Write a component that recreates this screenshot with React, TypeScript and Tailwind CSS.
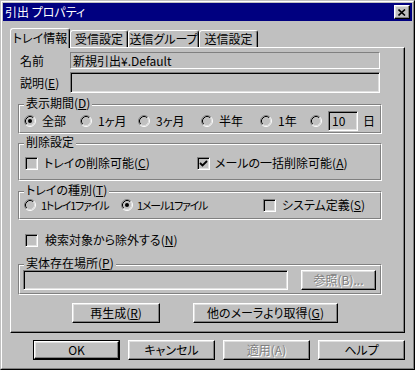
import React from "react";

const face = "bg-[#c0c0c0]";
const raised =
	"border border-t-white border-l-white border-r-black border-b-black shadow-[inset_-1px_-1px_0_#808080,inset_1px_1px_0_#dfdfdf]";
const sunken =
	"border border-t-[#808080] border-l-[#808080] border-r-white border-b-white shadow-[inset_1px_1px_0_#000,inset_-1px_-1px_0_#dfdfdf]";
const disabledText = "text-[#808080] [text-shadow:1px_1px_0_#fff]";

function Radio({ checked }: { checked?: boolean }) {
	return (
		<svg width="12" height="12" viewBox="0 0 12 12" className="shrink-0">
			<circle cx="6" cy="6" r="5" fill="#c0c0c0" />
			<path d="M2.11 9.89 A5.5 5.5 0 0 1 9.89 2.11" stroke="#808080" fill="none" />
			<path d="M9.89 2.11 A5.5 5.5 0 0 1 2.11 9.89" stroke="#fff" fill="none" />
			<path d="M2.82 9.18 A4.5 4.5 0 0 1 9.18 2.82" stroke="#000" fill="none" />
			<path d="M9.18 2.82 A4.5 4.5 0 0 1 2.82 9.18" stroke="#dfdfdf" fill="none" />
			{checked && <circle cx="6" cy="6" r="2" fill="#000" />}
		</svg>
	);
}

function Check({ checked }: { checked?: boolean }) {
	return (
		<div className={`w-[13px] h-[13px] shrink-0 ${sunken} ${face} flex items-center justify-center`}>
			{checked && (
				<svg width="9" height="9" viewBox="0 0 9 9">
					<path d="M1 4 L3.5 6.5 L8 2" stroke="#000" strokeWidth="1.8" fill="none" />
				</svg>
			)}
		</div>
	);
}

function Group({
	title,
	className,
	children,
}: {
	title: React.ReactNode;
	className: string;
	children: React.ReactNode;
}) {
	return (
		<div
			className={`relative w-[364px] border border-t-[#808080] border-l-[#808080] border-r-white border-b-white ${className}`}
		>
			<div className="h-full border border-t-white border-l-white border-r-[#808080] border-b-[#808080]">
				{children}
			</div>
			<span className={`absolute -top-[9px] left-[5px] px-[2px] leading-[14px] whitespace-nowrap ${face}`}>
				{title}
			</span>
		</div>
	);
}

function Button({
	children,
	className,
	disabled,
}: {
	children: React.ReactNode;
	className: string;
	disabled?: boolean;
}) {
	return (
		<div
			className={`h-[20px] ${raised} flex items-center justify-center leading-[14px] whitespace-nowrap ${
				disabled ? disabledText : ""
			} ${className}`}
		>
			{children}
		</div>
	);
}

function Tab({ label, active, width }: { label: string; active?: boolean; width: string }) {
	if (active) {
		return (
			<div
				className={`relative z-10 -mb-px h-[20px] ${width} ${face} border-t border-l border-r border-t-white border-l-white border-r-black rounded-t-[3px] shadow-[inset_-1px_0_0_#808080] flex items-center justify-center pb-[2px] leading-[14px] whitespace-nowrap`}
			>
				{label}
			</div>
		);
	}
	return (
		<div
			className={`h-[17px] ${width} border-t border-l border-r border-t-white border-l-white border-r-black rounded-t-[3px] shadow-[inset_-1px_0_0_#808080] flex items-center justify-center leading-[14px] whitespace-nowrap`}
		>
			{label}
		</div>
	);
}

export default function App() {
	return (
		<div
			className={`w-[415px] h-[370px] ${face} border border-t-[#c0c0c0] border-l-[#c0c0c0] border-r-black border-b-black font-['Noto_Sans_CJK_JP',sans-serif] [font-feature-settings:'palt'] text-[12px] text-black`}
		>
			<div className="h-full border border-t-white border-l-white border-r-[#808080] border-b-[#808080] p-px flex flex-col">
				{/* title bar */}
				<div className="h-[18px] bg-[#000080] flex items-center pl-[2px] pr-[2px] text-white">
					<span className="flex-1 leading-[14px]">引出 プロパティ</span>
					<div className={`w-[16px] h-[14px] ${face} ${raised} flex items-center justify-center`}>
						<svg width="8" height="7" viewBox="0 0 8 7">
							<path d="M0.5 0.5 L7 6.5 M7 0.5 L0.5 6.5" stroke="#000" strokeWidth="1.6" />
						</svg>
					</div>
				</div>

				<div className="px-[7px] pt-[7px] flex flex-col">
					{/* tabs */}
					<div className="flex items-end h-[19px] relative z-10">
						<Tab label="トレイ情報" active width="w-[60px]" />
						<Tab label="受信設定" width="w-[58px]" />
						<Tab label="送信グループ" width="w-[71px]" />
						<Tab label="送信設定" width="w-[59px]" />
					</div>

					{/* panel */}
					<div className="h-[286px] w-[395px] border border-t-white border-l-white border-r-black border-b-black shadow-[inset_-1px_-1px_0_#808080]">
						<div className="pl-[7px] pt-[4px] flex flex-col whitespace-nowrap">
							<div className="flex items-center h-[17px]">
								<span className="w-[52px] pl-[2px] leading-[14px]">名前</span>
								<div className="h-full w-[310px] border border-t-[#808080] border-l-[#808080] border-r-white border-b-white flex items-center pl-[2px] leading-[14px]">
									新規引出¥.Default
								</div>
							</div>
							<div className="flex items-center h-[21px] mt-[3px]">
								<span className="w-[52px] pl-[2px] leading-[14px]">
									説明(<span className="underline">E</span>)
								</span>
								<div className={`h-full w-[310px] ${sunken}`} />
							</div>

							<Group
								title={
									<>
										表示期間(<span className="underline">D</span>)
									</>
								}
								className="mt-[11px] h-[30px]"
							>
								<div className="pt-[8px] pl-[4px]">
									<div className="flex items-center h-[14px] leading-[14px]">
										<div className="flex items-center w-[56px]">
											<Radio checked />
											<span className="ml-[6px]">全部</span>
										</div>
										<div className="flex items-center w-[58px]">
											<Radio />
											<span className="ml-[6px]">1ヶ月</span>
										</div>
										<div className="flex items-center w-[63px]">
											<Radio />
											<span className="ml-[6px]">3ヶ月</span>
										</div>
										<div className="flex items-center w-[59px]">
											<Radio />
											<span className="ml-[6px]">半年</span>
										</div>
										<div className="flex items-center w-[50px]">
											<Radio />
											<span className="ml-[6px]">1年</span>
										</div>
										<Radio />
										<div
											className={`ml-[6px] -my-[3px] h-[20px] w-[30px] ${sunken} flex items-center pl-[3px]`}
										>
											10
										</div>
										<span className="ml-[5px]">日</span>
									</div>
								</div>
							</Group>

							<Group title="削除設定" className="mt-[9px] h-[38px]">
								<div className="pt-[11px] pl-[5px]">
									<div className="flex items-center h-[14px] leading-[14px]">
										<div className="flex items-center w-[172px]">
											<Check />
											<span className="ml-[6px]">
												トレイの削除可能(<span className="underline">C</span>)
											</span>
										</div>
										<Check checked />
										<span className="ml-[5px]">
											メールの一括削除可能(<span className="underline">A</span>)
										</span>
									</div>
								</div>
							</Group>

							<Group
								title={
									<>
										トレイの種別(<span className="underline">T</span>)
									</>
								}
								className="mt-[10px] h-[29px]"
							>
								<div className="pt-[5px] pl-[4px]">
									<div className="flex items-center h-[14px] leading-[14px]">
										<div className="flex items-center w-[97px] shrink-0">
											<Radio />
											<span className="ml-[5px] text-[11px] tracking-[-1.2px]">1トレイ1ファイル</span>
										</div>
										<div className="flex items-center w-[142px] shrink-0">
											<Radio checked />
											<span className="ml-[4px] text-[11px] tracking-[-1.2px]">1メール1ファイル</span>
										</div>
										<Check />
										<span className="ml-[6px]">
											システム定義(<span className="underline">S</span>)
										</span>
									</div>
								</div>
							</Group>

							<div className="mt-[13px] pl-[7px] flex items-center h-[14px] leading-[14px]">
								<Check />
								<span className="ml-[7px]">
									検索対象から除外する(<span className="underline">N</span>)
								</span>
							</div>

							<Group
								title={
									<>
										実体存在場所(<span className="underline">P</span>)
									</>
								}
								className="mt-[17px] h-[31px]"
							>
								<div className="pt-[4px] pl-[3px] flex">
									<div className={`h-[20px] w-[265px] ${sunken}`} />
									<Button className="ml-[13px] w-[75px]" disabled>
										参照(B)...
									</Button>
								</div>
							</Group>

							<div className="mt-[8px] flex">
								<Button className="ml-[54px] w-[88px]">
									再生成(<span className="underline">R</span>)
								</Button>
								<Button className="ml-[33px] w-[145px]">
									他のメーラより取得(<span className="underline">G</span>)
								</Button>
							</div>
						</div>
					</div>

					{/* dialog buttons */}
					<div className="mt-[7px] flex justify-end gap-[8px]">
						<div className="h-[20px] w-[87px] border border-black">
							<div className={`h-full ${raised} flex items-center justify-center leading-[14px]`}>
								OK
							</div>
						</div>
						<Button className="w-[87px]">キャンセル</Button>
						<Button className="w-[87px]" disabled>
							適用(A)
						</Button>
						<Button className="w-[87px]">ヘルプ</Button>
					</div>
				</div>
			</div>
		</div>
	);
}
